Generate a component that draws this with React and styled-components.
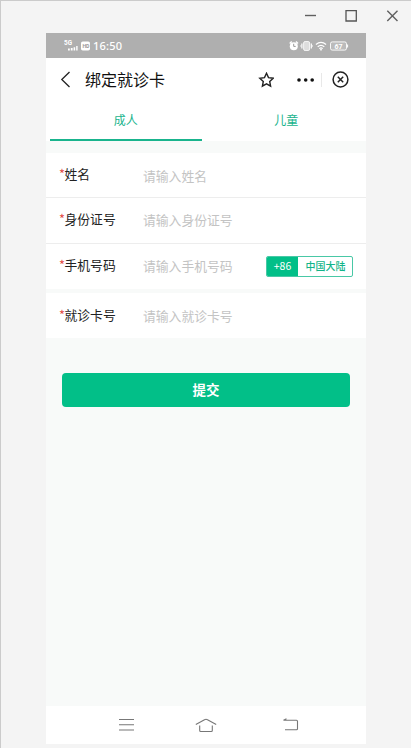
import React, { useState } from 'react';
import styled, { createGlobalStyle } from 'styled-components';

const GlobalStyle = createGlobalStyle`
  * {
    box-sizing: border-box;
  }

  body {
    margin: 0;
    font-family: 'Noto Sans CJK SC', 'Noto Sans', sans-serif;
    color: #222;
  }

  svg {
    display: block;
    flex: none;
  }
`;

const Window = styled.div`
  height: 748px;
  display: flex;
  flex-direction: column;
  background: #f4f4f4;
  border-top: 1px solid #cbcbcb;
  border-left: 1px solid #cbcbcb;
  overflow: hidden;
`;

const TitleBar = styled.div`
  height: 32px;
  flex: none;
  display: flex;
  justify-content: flex-end;
  padding: 9px 13px 0 0;
  gap: 29px;
`;

const Phone = styled.div`
  width: 320px;
  height: 711px;
  margin-left: 45px;
  display: flex;
  flex-direction: column;
  background: #f8faf9;
`;

const StatusBar = styled.div`
  height: 25px;
  flex: none;
  display: flex;
  align-items: center;
  justify-content: space-between;
  padding: 0 17px 0 18px;
  background: #afafaf;
`;

const StatusGroup = styled.div`
  display: flex;
  align-items: center;
`;

const Clock = styled.span`
  margin-left: 3px;
  font: 500 11px/24px 'Noto Sans', sans-serif;
  letter-spacing: 0.2px;
  color: #fff;
`;

const Header = styled.div`
  height: 43px;
  flex: none;
  display: flex;
  align-items: center;
  padding: 0 17px 0 14px;
  background: #fff;
`;

const Title = styled.div`
  flex: 1;
  margin: -2px 0 0 14px;
  font-size: 16px;
  line-height: 24px;
  color: #111;
`;

const Divider = styled.div`
  width: 1px;
  height: 14px;
  margin: 0 10px 0 7px;
  background: #e8e8e8;
`;

const Tabs = styled.div`
  height: 40px;
  flex: none;
  display: flex;
  gap: 9px;
  padding: 0 4px;
  background: #fff;
`;

const Tab = styled.div`
  flex: 1;
  font-size: 12px;
  line-height: 37px;
  text-align: center;
  color: #19b48d;
  border-bottom: 2px solid ${({ $active }) => ($active ? '#19b48d' : 'transparent')};
`;

const Group = styled.div`
  flex: none;
  margin-top: ${({ $gap }) => $gap}px;
  background: #fff;
`;

const Row = styled.div`
  height: ${({ $height }) => $height}px;
  display: flex;
  align-items: center;
  padding: 0 13px;
  font-size: 12.8px;

  & + & {
    padding-bottom: 2px;
    border-top: 1px solid #ededed;
  }
`;

const Label = styled.label`
  width: 84px;
  line-height: 20px;
  margin-top: -2px;
  white-space: nowrap;
`;

const Star = styled.span`
  display: inline-block;
  width: 5.5px;
  color: #e2473f;
`;

const Input = styled.input`
  width: 120px;
  height: 20px;
  padding: 0;
  border: 0;
  outline: 0;
  background: transparent;
  font: inherit;

  &::placeholder {
    color: #c3c3c3;
  }
`;

const AreaCode = styled.div`
  width: 87px;
  height: 21px;
  margin: 1px 0 0 auto;
  display: flex;
  border: 1px solid #49c8a6;
  border-radius: 2px;
  overflow: hidden;
  font-size: 10px;
  line-height: 18px;
  text-align: center;
`;

const Code = styled.span`
  width: 31px;
  background: #02bf88;
  color: #fff;
  font-size: 10.5px;
`;

const Region = styled.span`
  flex: 1;
  padding-left: 1px;
  color: #12b489;
  font-weight: 500;
`;

const Submit = styled.button`
  height: 34px;
  flex: none;
  margin: 34.5px 16px 0;
  padding: 0 0 2px;
  border: 0;
  border-radius: 4px;
  background: #02bf88;
  color: #fff;
  font: inherit;
  font-size: 13.5px;
  font-weight: 700;
`;

const NavBar = styled.div`
  height: 38px;
  margin-top: auto;
  display: flex;
  align-items: center;
  padding-left: 72px;
  background: #fff;

  svg + svg {
    margin-left: 60px;
  }

  svg + svg + svg {
    margin-left: 65px;
  }
`;

const Line = ({ w, h, color = '#222', width = 1.3, d, children }) => (
  <svg width={w} height={h} viewBox={`0 0 ${w} ${h}`} fill="none" stroke={color} strokeWidth={width}>
    {d && <path d={d} />}
    {children}
  </svg>
);

const Signal = () => (
  <svg width="26" height="12" viewBox="0 0 26 12" fill="#fff">
    <text x="0" y="5.2" fontSize="6.4" fontWeight="700" fontFamily="Roboto">5G</text>
    <path d="M4 8.5h1.8v2H4zM6.8 8h1.8v2.5H6.8zM9.6 7.2h1.6v3.3H9.6zM12.2 6h1.4v4.5h-1.4z" />
    <rect x="17" y="1.5" width="9" height="9" rx="1.8" />
    <text x="18.4" y="8.1" fontSize="5.2" fontWeight="700" fontFamily="Roboto" fill="#999">HD</text>
  </svg>
);

const StatusIcons = () => (
  <svg width="60" height="12" viewBox="0 0 60 12" fill="#fff">
    <circle cx="4.8" cy="6.2" r="4" />
    <path d="M.7 3.5l2-2M7 1.5l2 2" stroke="#fff" strokeWidth="1.4" />
    <path d="M4.7 3.8v2.6h2" fill="none" stroke="#999" />
    <rect x="14.6" y="1.5" width="6" height="9" rx="1.5" fill="#ddd" stroke="#fff" strokeWidth=".8" />
    <path d="M12.9 3.5v5M22.3 3.5v5" stroke="#fff" strokeWidth="1.2" />
    <path d="M11.8 5.2v1.6M23.4 5.2v1.6" stroke="#fff" strokeWidth=".7" />
    <path
      d="M26.9 4.5q5.1-4.2 10.2 0M28.7 6.7q3.3-2.8 6.6 0M30.3 8.6q1.7-1.4 3.4 0"
      fill="none"
      stroke="#fff"
      strokeWidth="1.2"
    />
    <circle cx="32" cy="9.7" r=".9" />
    <rect x="41.5" y="1.9" width="16" height="8.2" rx="1.8" fill="#bbb" stroke="#fff" strokeWidth=".9" />
    <path d="M58.6 4.5v3" stroke="#fff" />
    <text x="49.6" y="8.6" fontSize="7" fontWeight="700" fontFamily="Roboto" textAnchor="middle">67</text>
  </svg>
);

const HeaderActions = () => (
  <StatusGroup>
    <Line w={16} h={16} width={1.4} d="M8.5 1.3l2 4.3 4.7.6-3.5 3.2.9 4.7-4.1-2.3-4.1 2.3.9-4.7-3.5-3.2 4.7-.6z" />
    <svg width="40" height="6" viewBox="0 0 40 6" fill="#111">
      <circle cx="25" cy="3" r="1.8" />
      <circle cx="31.7" cy="3" r="1.8" />
      <circle cx="38.2" cy="3" r="1.8" />
    </svg>
    <Divider />
    <Line w={17} h={17} width={1.5}>
      <circle cx="8.5" cy="8.5" r="7.4" />
      <path d="M5.8 5.8l5.4 5.4M11.2 5.8l-5.4 5.4" />
    </Line>
  </StatusGroup>
);

const Field = ({ label, height, children }) => (
  <Row $height={height}>
    <Label>
      <Star>*</Star>
      {label}
    </Label>
    <Input placeholder={`请输入${label}`} />
    {children}
  </Row>
);

const App = () => {
  const [tab, setTab] = useState('成人');

  return (
    <Window>
      <GlobalStyle />
      <TitleBar>
        <Line w={12} h={12} color="#606060" width={1.4} d="M1 5.5h11" />
        <Line w={12} h={12} color="#555" width={1.3} d="M1 .7h10.3V11H1z" />
        <Line w={12} h={12} color="#606060" width={1.4} d="M1.3 .8l10.2 10.2M11.5 .8L1.3 11" />
      </TitleBar>
      <Phone>
        <StatusBar>
          <StatusGroup>
            <Signal />
            <Clock>16:50</Clock>
          </StatusGroup>
          <StatusIcons />
        </StatusBar>
        <Header>
          <Line w={11} h={17} width={1.3} d="M9.5 1L1.8 8.5 9.5 16" />
          <Title>绑定就诊卡</Title>
          <HeaderActions />
        </Header>
        <Tabs>
          {['成人', '儿童'].map((name) => (
            <Tab key={name} $active={tab === name} onClick={() => setTab(name)}>{name}</Tab>
          ))}
        </Tabs>
        <Group $gap={12}>
          <Field label="姓名" height={44} />
          <Field label="身份证号" height={46} />
          <Field label="手机号码" height={46}>
            <AreaCode>
              <Code>+86</Code>
              <Region>中国大陆</Region>
            </AreaCode>
          </Field>
        </Group>
        <Group $gap={4}>
          <Field label="就诊卡号" height={45} />
        </Group>
        <Submit>提交</Submit>
        <NavBar>
          <Line w={17} h={14} color="#777" width={1.1} d="M1 1.5h15M1 6.7h15M1 12h15" />
          <Line w={22} h={15} color="#777" width={1.1} d="M.8 6.5L9.5 1.7q1.5-.8 3 0l8.7 4.8M4.7 7.5v5q0 1 1 1h10.6q1 0 1-1v-5" />
          <Line w={17} h={14} color="#777" width={1.1} d="M4.5 .8L1.5 2.2H14.5q1 0 1 1v7.5q0 1-1 1H3" />
        </NavBar>
      </Phone>
    </Window>
  );
};

export default App;
